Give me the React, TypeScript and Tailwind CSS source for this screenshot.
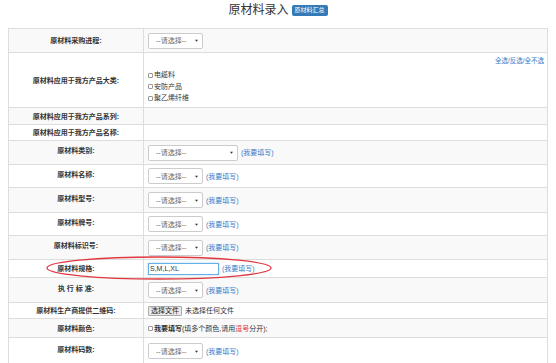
import React from 'react';

const FONT = "font-['Liberation_Sans','Noto_Sans_CJK_SC',sans-serif]";

function Select({ wide = false }: { wide?: boolean }) {
  return (
    <div
      className={`inline-flex h-[16px] items-center justify-between rounded-[2px] border border-[#ccc] bg-white pl-[7px] pr-[4px] text-[7px] text-[#666] ${
        wide ? 'w-[90px]' : 'w-[55px]'
      }`}
    >
      <span>--请选择--</span>
      <svg width="3" height="3" viewBox="0 0 4 4">
        <path d="M0 1 L4 1 L2 3.5 Z" fill="#333" />
      </svg>
    </div>
  );
}

function Fill() {
  return <span className="ml-[3px] text-[7px] text-[#3a7bc8]">(我要填写)</span>;
}

function Check() {
  return <span className="mr-[1px] inline-block h-[5px] w-[5px] rounded-[1px] border border-[#999] bg-white align-middle" />;
}

function Row({
  h,
  gray,
  label,
  lift = true,
  children,
}: {
  h: number;
  gray: boolean;
  label: string;
  lift?: boolean;
  children?: React.ReactNode;
}) {
  return (
    <tr className={gray ? 'bg-[#f9f9f9]' : 'bg-white'} style={{ height: h }}>
      <td className="w-[135px] border border-[#ddd] p-0 text-center align-middle text-[7px] leading-[9px]">
        <span className={`inline-block font-bold text-[#333] ${lift ? 'mb-[4px]' : ''}`}>{label}</span>
      </td>
      <td className="border border-[#ddd] py-0 pl-[4px] pr-0 align-middle text-[7px] leading-[9px]">
        <div className="flex items-center">{children}</div>
      </td>
    </tr>
  );
}

export default function App() {
  return (
    <div className={`relative h-[363px] w-[556px] overflow-hidden bg-white ${FONT}`}>
      <div className="flex h-[28px] items-start justify-center gap-[3px] pt-[2px]">
        <span className="text-[12px] leading-[16px] text-[#333]">原材料录入</span>
        <span className="mt-[3px] rounded-[2px] bg-[#337ab7] px-[3px] text-[6px] leading-[11px] text-white">原材料汇总</span>
      </div>

      <table className="ml-[8px] w-[540px] border-collapse">
        <tbody>
          <Row h={24} gray label="原材料采购进程:" lift={false}>
            <Select />
          </Row>
          <tr className="bg-white" style={{ height: 55 }}>
            <td className="w-[135px] border border-[#ddd] p-0 text-center align-middle text-[7px] leading-[9px]">
              <span className="font-bold text-[#333]">原材料应用于我方产品大类:</span>
            </td>
            <td className="border border-[#ddd] py-0 pl-[4px] pr-[3px] align-top text-[7px] leading-[9px]">
              <div className="flex justify-between">
                <div className="flex flex-col pt-[16px] text-[7px] leading-[11.5px] text-[#333]">
                  <span>
                    <Check />
                    电缆料
                  </span>
                  <span>
                    <Check />
                    安防产品
                  </span>
                  <span>
                    <Check />
                    聚乙烯纤维
                  </span>
                </div>
                <span className="pt-[3px] text-[6.5px] leading-[9px] text-[#3a7bc8]">全选/反选/全不选</span>
              </div>
            </td>
          </tr>
          <Row h={17} gray label="原材料应用于我方产品系列:" lift={false} />
          <Row h={16} gray={false} label="原材料应用于我方产品名称:" lift={false} />
          <Row h={24} gray label="原材料类别:">
            <Select wide />
            <Fill />
          </Row>
          <Row h={23} gray={false} label="原材料名称:">
            <Select />
            <Fill />
          </Row>
          <Row h={25} gray label="原材料型号:">
            <Select />
            <Fill />
          </Row>
          <Row h={23} gray={false} label="原材料牌号:">
            <Select />
            <Fill />
          </Row>
          <Row h={24} gray label="原材料标识号:">
            <Select />
            <Fill />
          </Row>
          <Row h={18} gray={false} label="原材料规格:" lift={false}>
            <div className="flex h-[12px] w-[71px] items-center border border-[#66afe9] bg-white pl-[1px] text-[7px] text-[#333] shadow-[0_0_2px_rgba(102,175,233,0.6)]">
              S,M,L,XL
            </div>
            <Fill />
          </Row>
          <Row h={25} gray label="执 行 标 准:">
            <Select />
            <Fill />
          </Row>
          <Row h={16} gray={false} label="原材料生产商提供二维码:" lift={false}>
            <span className="flex h-[10px] items-center rounded-[1px] border border-[#aaa] bg-[#e9e9e9] px-[2px] text-[7px] text-[#222]">
              选择文件
            </span>
            <span className="ml-[3px] text-[7px] text-[#333]">未选择任何文件</span>
          </Row>
          <Row h={19} gray label="原材料颜色:" lift={false}>
            <span className="text-[7px] text-[#333]">
              <Check />
              <span className="font-bold">我要填写</span>(填多个颜色,请用<span className="text-[#e0302c]">逗号</span>分开);
            </span>
          </Row>
          <Row h={27} gray={false} label="原材料码数:">
            <Select />
            <Fill />
          </Row>
        </tbody>
      </table>

      <svg className="pointer-events-none absolute left-0 top-0" width="556" height="363">
        <ellipse cx="159" cy="268" rx="112" ry="11" fill="none" stroke="#e0383e" strokeWidth="1.3" />
      </svg>
    </div>
  );
}
